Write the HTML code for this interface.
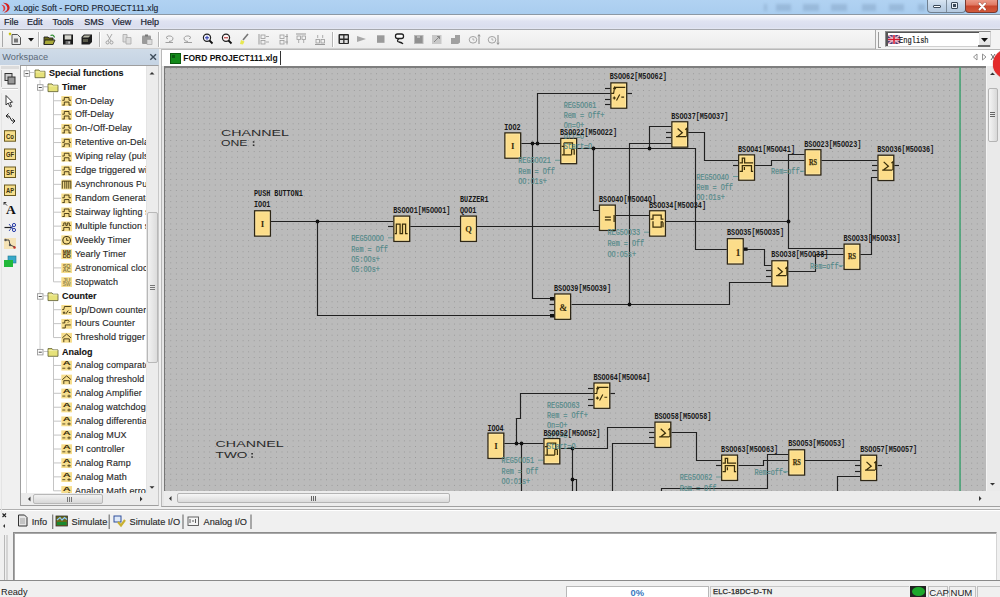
<!DOCTYPE html>
<html><head><meta charset="utf-8">
<style>
*{margin:0;padding:0;box-sizing:border-box}
html,body{width:1000px;height:597px;overflow:hidden;background:#f0f0f0;font-family:"Liberation Sans",sans-serif;color:#000}
.a{position:absolute}
.t{position:absolute;white-space:nowrap;line-height:1}
</style></head><body>
<div class="a" style="left:0;top:0;width:1000px;height:14px;background:linear-gradient(#b1d2f2,#a9cdef)"></div>
<div class="a" style="left:764px;top:4px;width:3px;height:7px;background:rgba(80,110,140,0.22);filter:blur(1.5px)"></div>
<div class="a" style="left:776px;top:4px;width:15px;height:7px;background:rgba(80,110,140,0.22);filter:blur(1.5px)"></div>
<div class="a" style="left:803px;top:4px;width:16px;height:7px;background:rgba(80,110,140,0.22);filter:blur(1.5px)"></div>
<div class="a" style="left:831px;top:4px;width:16px;height:7px;background:rgba(80,110,140,0.22);filter:blur(1.5px)"></div>
<div class="a" style="left:862px;top:4px;width:14px;height:7px;background:rgba(80,110,140,0.22);filter:blur(1.5px)"></div>
<div class="a" style="left:889px;top:4px;width:15px;height:7px;background:rgba(80,110,140,0.22);filter:blur(1.5px)"></div>
<div class="a" style="left:918px;top:4px;width:7px;height:7px;background:rgba(80,110,140,0.22);filter:blur(1.5px)"></div>
<div class="a" style="left:0;top:14px;width:1000px;height:1px;background:#8c99a5"></div>
<svg class="a" style="left:0;top:2px" width="11" height="11" viewBox="0 0 11 11"><path d="M3,0.8 C7.5,0.5 10,3.5 9.6,6.3 C9.2,9 6.5,10.8 3.8,10.6 C6.3,9.3 7.5,7.8 7.3,5.8 C7.1,3.6 5.3,1.9 3,0.8Z" fill="#d42020"/><path d="M1,2.8 C3.6,2.6 5.4,4.4 5.3,6.4 C5.2,8.2 3.8,9.4 2.2,9.6 C3.3,8.6 3.7,7.4 3.5,6.2 C3.3,4.6 2.3,3.5 1,2.8Z" fill="#e43a3a"/></svg>
<div class="t" style="left:14px;top:3.5px;font-size:8.6px;color:#1a2733;letter-spacing:0.03px;-webkit-text-stroke:0.12px #1a2733">xLogic Soft - FORD PROJECT111.xlg</div>
<div class="a" style="left:927px;top:-1px;width:39px;height:14px;border:1px solid #6f7f90;border-top:none;border-radius:0 0 4px 4px;background:linear-gradient(#dce8f4,#c3d5e8 50%,#b4c9df)"></div>
<div class="a" style="left:946px;top:0;width:1px;height:12px;background:#7d8c9b"></div>
<div class="a" style="left:933px;top:5px;width:8px;height:3px;border:1px solid #3b4a5a;background:#fff;border-radius:1px"></div>
<div class="a" style="left:951px;top:2px;width:7px;height:7px;border:1.5px solid #3b4a5a;border-radius:1px;background:#e8eef5"></div>
<div class="a" style="left:953px;top:4px;width:3px;height:3px;background:#3b4a5a"></div>
<div class="a" style="left:965px;top:-1px;width:33px;height:14px;border:1px solid #7a3a30;border-top:none;border-radius:0 0 4px 4px;background:linear-gradient(#eda08f,#e07a64 45%,#c9462c 55%,#d25a3c)"></div>
<svg class="a" style="left:977px;top:1.5px" width="11" height="9" viewBox="0 0 11 9"><path d="M2.5,1.5 L8,7.5 M8,1.5 L2.5,7.5" stroke="#3a1a10" stroke-width="3" stroke-linecap="round" opacity="0.35"/><path d="M2.5,1.5 L8,7.5 M8,1.5 L2.5,7.5" stroke="#fff" stroke-width="2" stroke-linecap="round"/></svg>
<div class="a" style="left:0;top:15px;width:1000px;height:14px;background:linear-gradient(#fafbfd 0,#eff1f8 20%,#dfe2f1 45%,#dadeee 85%,#e3e6f2 100%)"></div>
<div class="a" style="left:0;top:28.6px;width:1000px;height:1.2px;background:#a6a8ae"></div>
<div class="t" style="left:4px;top:18px;font-size:9px;color:#1b2533;-webkit-text-stroke:0.2px #1b2533">File</div>
<div class="t" style="left:27px;top:18px;font-size:9px;color:#1b2533;-webkit-text-stroke:0.2px #1b2533">Edit</div>
<div class="t" style="left:52.5px;top:18px;font-size:9px;color:#1b2533;-webkit-text-stroke:0.2px #1b2533">Tools</div>
<div class="t" style="left:84.3px;top:18px;font-size:9px;color:#1b2533;-webkit-text-stroke:0.2px #1b2533">SMS</div>
<div class="t" style="left:112px;top:18px;font-size:9px;color:#1b2533;-webkit-text-stroke:0.2px #1b2533">View</div>
<div class="t" style="left:140.5px;top:18px;font-size:9px;color:#1b2533;-webkit-text-stroke:0.2px #1b2533">Help</div>
<div class="a" style="left:0;top:29.8px;width:1000px;height:19px;background:linear-gradient(#f6f6f6,#ececec)"></div>
<div class="a" style="left:0;top:48px;width:1000px;height:1px;background:#cfcfcf"></div>
<div class="a" style="left:2px;top:31px;width:1px;height:16px;background:#a8a8a8"></div>
<div class="a" style="left:37.5px;top:32px;width:1px;height:15px;background:#b4b4b4"></div><div class="a" style="left:38.5px;top:32px;width:1px;height:15px;background:#fff"></div>
<div class="a" style="left:99px;top:32px;width:1px;height:15px;background:#b4b4b4"></div><div class="a" style="left:100px;top:32px;width:1px;height:15px;background:#fff"></div>
<div class="a" style="left:158px;top:32px;width:1px;height:15px;background:#b4b4b4"></div><div class="a" style="left:159px;top:32px;width:1px;height:15px;background:#fff"></div>
<div class="a" style="left:332px;top:32px;width:1px;height:15px;background:#b4b4b4"></div><div class="a" style="left:333px;top:32px;width:1px;height:15px;background:#fff"></div>
<svg class="a" style="left:0;top:0" width="1000" height="49" viewBox="0 0 1000 49">
<path d="M12,34.5 H17.5 L20.5,37.5 V44.5 H12Z" fill="#e9e9e9" stroke="#555" stroke-width="1"/><rect x="14" y="38.5" width="4" height="4" fill="#777"/><path d="M9,33 L11,35 M11,33 L9,35" stroke="#c8c000" stroke-width="1.2"/><path d="M28,38 H34 L31,41.5Z" fill="#111"/><path d="M44,37 H48 L49,38 H53 V44.5 H44Z" fill="#6a6a18" stroke="#222" stroke-width="0.9"/><path d="M45,40 H55 L53,44.5 H44Z" fill="#a8a838" stroke="#222" stroke-width="0.9"/><path d="M50.5,35.5 Q53.5,34 54.5,37.5" stroke="#2a8a2a" fill="none" stroke-width="1.2"/><rect x="63" y="34.5" width="10" height="10" fill="#1a1a1a"/><rect x="64.7" y="35.3" width="6.6" height="4.2" fill="#d8d8d0"/><rect x="65.5" y="41" width="5" height="3" fill="#6a6a6a"/><rect x="68.5" y="41.5" width="1.2" height="2" fill="#eee"/><path d="M81.5,37 L84,34.5 H92 V42 L89.5,44.5 H81.5Z" fill="#1e1e1e"/><path d="M82.5,37.5 L84.5,35.5 H90.5 L88.5,37.5Z" fill="#b8b8a8"/><rect x="83" y="39" width="5" height="3" fill="#5a5a4a"/><path d="M107,34 L111,41 M112,34 L108,41" stroke="#a0a0a0" stroke-width="0.9" fill="none"/><circle cx="107.5" cy="42.5" r="1.5" fill="none" stroke="#a0a0a0"/><circle cx="111.5" cy="42.5" r="1.5" fill="none" stroke="#a0a0a0"/><path d="M123,34.5 H127 V42 H123Z" fill="#ddd" stroke="#a8a8a8" stroke-width="0.8"/><path d="M126,37.5 H131 V44 H126Z" fill="#ddd" stroke="#a8a8a8" stroke-width="0.8"/><rect x="142" y="35.5" width="9" height="8.5" fill="#9a9a9a" rx="1"/><rect x="145" y="34.5" width="3" height="2" fill="#777"/><rect x="147" y="39.5" width="5" height="5" fill="#ddd" stroke="#999" stroke-width="0.6"/><path d="M165.5,42.5 H173 M168,36 Q173,35.5 173,39 Q172.5,41.5 169,41.5 M168,36 L166,37.5 L168,39" stroke="#a0a0a0" stroke-width="1" fill="none"/><path d="M184,42.5 H192 M189,36 Q184,35.5 184,39 Q184.5,41.5 188,41.5 M189,36 L191,37.5 L189,39" stroke="#a0a0a0" stroke-width="1" fill="none"/><circle cx="207" cy="37.8" r="3.6" fill="#f4f4ff" stroke="#222" stroke-width="1.2"/><path d="M209.5,40.5 L212.5,43.5" stroke="#111" stroke-width="1.8"/><path d="M205,37.8 H209 M207,35.8 V39.8" stroke="#2233aa" stroke-width="1"/><circle cx="226" cy="37.8" r="3.6" fill="#fff4f4" stroke="#222" stroke-width="1.2"/><path d="M228.5,40.5 L231.5,43.5" stroke="#111" stroke-width="1.8"/><path d="M224,37.8 H228" stroke="#aa2222" stroke-width="1"/><path d="M248,34 L243,40" stroke="#777" stroke-width="1.6"/><path d="M241,40 L244.5,41.5 L243,44.5 L240,44 Z" fill="#e8e850"/><path d="M259,34 V44.5" stroke="#999" stroke-width="1"/><rect x="261" y="35" width="4" height="3.5" fill="none" stroke="#999" stroke-width="0.8"/><rect x="261" y="40.5" width="4" height="3.5" fill="none" stroke="#999" stroke-width="0.8"/><path d="M266,36.5 H269 M266,42 H269" stroke="#999" stroke-width="0.8"/><path d="M287,34 V44.5" stroke="#999" stroke-width="1"/><rect x="280" y="35" width="4" height="3.5" fill="none" stroke="#999" stroke-width="0.8"/><rect x="280" y="40.5" width="4" height="3.5" fill="none" stroke="#999" stroke-width="0.8"/><path d="M285,36.5 H288 M285,42 H288" stroke="#999" stroke-width="0.8"/><path d="M296,34 H306" stroke="#999" stroke-width="1"/><rect x="297" y="36" width="3.5" height="3.5" fill="none" stroke="#999" stroke-width="0.8"/><rect x="302" y="36" width="3.5" height="3.5" fill="none" stroke="#999" stroke-width="0.8"/><path d="M298.7,40 V43 M303.7,40 V43" stroke="#999" stroke-width="0.8"/><path d="M315,44.5 H325" stroke="#999" stroke-width="1"/><rect x="316" y="39.5" width="3.5" height="3.5" fill="none" stroke="#999" stroke-width="0.8"/><rect x="321" y="39.5" width="3.5" height="3.5" fill="none" stroke="#999" stroke-width="0.8"/><path d="M317.7,35 V38 M322.7,35 V38" stroke="#999" stroke-width="0.8"/><rect x="338.5" y="34" width="10.5" height="10" fill="#2a2a2a" rx="1"/><rect x="340" y="35.5" width="3.2" height="3" fill="#ddd"/><rect x="344.5" y="35.5" width="3.2" height="3" fill="#ddd"/><rect x="340" y="40" width="3.2" height="3" fill="#ddd"/><rect x="344.5" y="40" width="3.2" height="3" fill="#ddd"/><path d="M357,36 L366,39 L357,42Z" fill="#a8a8a8"/><rect x="377" y="35.3" width="7.5" height="7.5" fill="#9a9a9a"/><rect x="395.5" y="34" width="8" height="4.5" rx="2" fill="#fff" stroke="#222" stroke-width="1.3"/><path d="M399,38.5 Q396,41 399,42 Q402,42.5 403,44" stroke="#222" stroke-width="1.3" fill="none"/><rect x="414" y="35" width="9.5" height="9" fill="#b8b8b8"/><path d="M415,36 H417 V38 H420 V36 H422.5 V43 H415Z" fill="#909090"/><rect x="432" y="35" width="9.5" height="9" fill="#c8c8c8"/><path d="M434,42 L439.5,36.5 M437,36.5 H439.5 V39" stroke="#888" stroke-width="1" fill="none"/><path d="M451,38 H455 V35 H460 V42.5 L458,44 H451Z" fill="#a0a0a0"/><ellipse cx="473" cy="39.8" rx="3.8" ry="3.3" fill="none" stroke="#999" stroke-width="0.9"/><path d="M473,38 V40 H474.5" stroke="#999" stroke-width="0.7" fill="none"/><path d="M479,35 V44" stroke="#888" stroke-width="1"/><path d="M477.8,36.3 L479,34.5 L480.2,36.3" stroke="#888" stroke-width="0.8" fill="none"/><ellipse cx="492" cy="39.8" rx="3.8" ry="3.3" fill="none" stroke="#999" stroke-width="0.9"/><path d="M492,38 V40 H493.5" stroke="#999" stroke-width="0.7" fill="none"/><path d="M498,35 V44" stroke="#888" stroke-width="1"/><path d="M496.8,42.7 L498,44.5 L499.2,42.7" stroke="#888" stroke-width="0.8" fill="none"/>
</svg>
<div class="a" style="left:874.5px;top:30px;width:1px;height:19px;background:#a8a8a8"></div><div class="a" style="left:875.5px;top:30px;width:125px;height:18.5px;background:#f3f3f3"></div><div class="a" style="left:878px;top:32px;width:1px;height:15px;background:#9a9a9a"></div><div class="a" style="left:878px;top:46.5px;width:3px;height:1px;background:#9a9a9a"></div>
<div class="a" style="left:885px;top:31px;width:106px;height:16px;background:#fff;border:1px solid #8a8a8a;border-right-color:#d0d0d0;border-bottom-color:#d0d0d0"></div>
<div class="a" style="left:886px;top:32px;width:1.5px;height:14px;background:#555"></div>
<div class="a" style="left:886px;top:32px;width:104px;height:1.2px;background:#555"></div>
<svg class="a" style="left:888px;top:35px" width="12" height="9" viewBox="0 0 12 9"><rect width="12" height="9" fill="#4a3a7a"/><path d="M0,0 L12,9 M12,0 L0,9" stroke="#e8b0c0" stroke-width="1.6"/><path d="M6,0 V9 M0,4.5 H12" stroke="#fff" stroke-width="2.6"/><path d="M6,0 V9 M0,4.5 H12" stroke="#d81830" stroke-width="1.6"/></svg>
<svg class="a" style="left:898px;top:32px" width="40" height="14" viewBox="898 32 40 14"><text x="899" y="42.6" font-family="Liberation Mono" font-size="9.2" fill="#222" stroke="#222" stroke-width="0.2" textLength="29.6" lengthAdjust="spacingAndGlyphs">English</text></svg>
<div class="a" style="left:979px;top:32px;width:11px;height:14px;background:linear-gradient(#f4f4f4,#e2e2e2);border-left:1px solid #e8e8e8"></div>
<div class="a" style="left:978px;top:45px;width:12px;height:1.5px;background:#6a6a6a"></div>
<svg class="a" style="left:980px;top:37px" width="9" height="6" viewBox="0 0 9 6"><path d="M1,1 H8 L4.5,5Z" fill="#111"/></svg>
<div class="a" style="left:159px;top:49px;width:841px;height:459px;background:#f0f0f0"></div>
<div class="a" style="left:161px;top:49px;width:839px;height:458px;background:#fff;border-left:1px solid #b8b8b8;border-top:1px solid #b8b8b8;border-bottom:1px solid #a0a0a0"></div><div class="a" style="left:162px;top:66px;width:2px;height:440px;background:#e6e6e6"></div>
<div class="a" style="left:169.5px;top:53px;width:11.5px;height:10.6px;background:#138a1a;border:1px solid #0a5a0e"></div>
<div class="a" style="left:172px;top:55px;width:3px;height:3px;background:#0a5a10"></div>
<div class="t" style="left:183.2px;top:53.8px;font-size:8.5px;font-weight:bold;color:#111">FORD PROJECT111.xlg</div>
<div class="a" style="left:280px;top:51px;width:1px;height:14px;background:#333"></div>
<svg class="a" style="left:970px;top:52px" width="30" height="10" viewBox="0 0 30 10"><path d="M7,2 L3.5,5 L7,8Z" fill="none" stroke="#888" stroke-width="0.9"/><path d="M12.5,2 L16,5 L12.5,8Z" fill="none" stroke="#888" stroke-width="0.9"/><path d="M21,2 L25,8 M25,2 L21,8" stroke="#666" stroke-width="1"/></svg>
<div class="a" style="left:164px;top:66px;width:822px;height:425.7px;background:#bbbbbb;border-left:1px solid #767676;border-top:2px solid #7e7e7e"></div>
<div class="a" style="left:986px;top:66px;width:14px;height:425px;background:#eaeaea;border-left:1px solid #f4f4f4"></div>
<svg class="a" style="left:986px;top:66px" width="14" height="425" viewBox="0 0 14 425"><path d="M4,9 L6.5,6.5 L9,9Z" fill="#333"/><path d="M4,417 L6.5,419.5 L9,417Z" fill="#333"/></svg>
<div class="a" style="left:987.5px;top:87.5px;width:10px;height:54px;background:linear-gradient(90deg,#f4f4f4,#d8d8d8);border:1px solid #b4b4b4;border-radius:2px"></div><div class="a" style="left:990px;top:112px;width:5px;height:1px;background:#666;box-shadow:0 2px 0 #666,0 4px 0 #666"></div>
<div class="a" style="left:164px;top:491px;width:836px;height:15px;background:#ececec"></div>
<svg class="a" style="left:164px;top:491px" width="836" height="15" viewBox="0 0 836 15"><path d="M5,7.5 L7.5,5 V10Z" fill="#333"/><path d="M815,5 L817.5,7.5 L815,10Z" fill="#333"/></svg>
<div class="a" style="left:177.3px;top:492.7px;width:273px;height:10.5px;background:linear-gradient(#f6f6f6,#dadada);border:1px solid #b4b4b4;border-radius:2px"></div>
<div class="a" style="left:311px;top:495.5px;width:1px;height:5px;background:#666;box-shadow:2px 0 0 #666,4px 0 0 #666"></div>
<div class="a" style="left:993.3px;top:48.5px;width:31px;height:30px;border-radius:50%;background:#e42b2b;box-shadow:0 0 1px #b01818"></div>
<div class="a" style="left:0;top:507px;width:1000px;height:74px;background:#f0f0f0"></div>
<div class="a" style="left:0;top:508.5px;width:1000px;height:1px;background:#b0b0b0"></div><div class="a" style="left:0;top:509.5px;width:1000px;height:1px;background:#fff"></div>
<svg class="a" style="left:0;top:510px" width="12" height="70" viewBox="0 0 12 70"><path d="M2.5,3.5 L6,7 M6,3.5 L2.5,7" stroke="#222" stroke-width="1.1"/><path d="M5,14 L3,16 L5,18Z" fill="#333"/><path d="M4.5,25 V70 M7,25 V70" stroke="#b8b8b8" stroke-width="1"/></svg>
<svg class="a" style="left:0;top:510px" width="260" height="22" viewBox="0 510 260 22">
<path d="M18.5,515 H24.5 L27,517.5 V526 H18.5Z" fill="#e4e4e4" stroke="#333" stroke-width="1"/><path d="M20,519 H25 M20,521 H25 M20,523 H25" stroke="#888" stroke-width="0.7"/>
<rect x="56" y="516" width="11.5" height="10" fill="#6a6a18" stroke="#333" stroke-width="0.8"/><path d="M57,520 L60,517.5 L62,520 L64.5,517.5 L67,519.5" stroke="#8ec8ff" stroke-width="1.2" fill="none"/><rect x="57" y="522" width="9.5" height="3" fill="#1a8a30"/>
<rect x="114" y="516" width="7" height="6" fill="#dde8f8" stroke="#2f4f9a" stroke-width="1"/><path d="M118,522 L121,525.5 L125,520" stroke="#c8b030" stroke-width="2.2" fill="none"/>
<rect x="188" y="517" width="10.5" height="8.5" fill="#f4f4f4" stroke="#555" stroke-width="0.9"/><path d="M190,519 V523 M192,521 H194 M195.5,519 V523" stroke="#333" stroke-width="0.8"/>
<path d="M52.7,514.5 V529 M109.2,514.5 V529 M183,514.5 V529 M251,514.5 V529" stroke="#777" stroke-width="1.2"/>
</svg>
<div class="t" style="left:31.8px;top:518.2px;font-size:9.2px;color:#2a2a2a;-webkit-text-stroke:0.15px #2a2a2a">Info</div>
<div class="t" style="left:71.5px;top:518.2px;font-size:9.2px;color:#2a2a2a;-webkit-text-stroke:0.15px #2a2a2a">Simulate</div>
<div class="t" style="left:129.5px;top:518.2px;font-size:9.2px;color:#2a2a2a;-webkit-text-stroke:0.15px #2a2a2a">Simulate I/O</div>
<div class="t" style="left:203.6px;top:518.2px;font-size:9.2px;color:#2a2a2a;-webkit-text-stroke:0.15px #2a2a2a">Analog I/O</div>
<div class="a" style="left:13px;top:532px;width:984px;height:49px;background:#fff;border:1px solid #8c8c8c;border-right-color:#d4d4d4;border-bottom-color:#dcdcdc"></div>
<div class="a" style="left:14px;top:533px;width:982px;height:1px;background:#a8a8a8"></div>
<div class="a" style="left:14px;top:533px;width:1px;height:47px;background:#a8a8a8"></div>
<div class="a" style="left:0;top:580px;width:1000px;height:17px;background:#f0f0f0"></div>
<div class="a" style="left:0;top:580px;width:1000px;height:1.3px;background:#8a8a8a"></div>
<div class="t" style="left:1px;top:587.5px;font-size:9.2px;color:#1a1a1a">Ready</div>
<div class="a" style="left:566px;top:585.5px;width:143px;height:12px;background:#fff;border:1px solid #b8b8b8;border-bottom:none"></div>
<div class="t" style="left:630.5px;top:588px;font-size:9.4px;color:#3a78c0;font-weight:bold">0%</div>
<div class="a" style="left:710px;top:585.5px;width:199px;height:12px;border:1px solid #c8c8c8;border-bottom:none;border-right:none"></div>
<div class="t" style="left:713px;top:587.6px;font-size:7.6px;color:#222;-webkit-text-stroke:0.25px #222;letter-spacing:0.15px">ELC-18DC-D-TN</div>
<div class="a" style="left:910px;top:585.5px;width:16px;height:12px;background:#222"></div>
<div class="a" style="left:911.5px;top:587px;width:13px;height:9px;border-radius:50%;background:#1ca82c"></div>
<div class="a" style="left:927.5px;top:585.5px;width:20.5px;height:12px;border:1px solid #c0c0c0;border-bottom:none"></div>
<div class="t" style="left:929.3px;top:587.6px;font-size:9.6px;color:#222">CAP</div>
<div class="a" style="left:949px;top:585.5px;width:26.5px;height:12px;border:1px solid #c0c0c0;border-bottom:none"></div>
<div class="t" style="left:950.5px;top:587.6px;font-size:9.6px;color:#222">NUM</div>
<div class="a" style="left:977px;top:585.5px;width:23px;height:12px;border:1px solid #c0c0c0;border-bottom:none;border-right:none"></div>
<div class="a" style="left:0;top:49px;width:159px;height:16px;background:linear-gradient(#cfdbe8,#c5d3e3)"></div>
<div class="t" style="left:2.3px;top:53.2px;font-size:9.2px;color:#5a6877">Workspace</div>
<svg class="a" style="left:149px;top:52.5px" width="9" height="9" viewBox="0 0 9 9"><path d="M1.3,1.3 L7,6.8 M7,1.3 L1.3,6.8" stroke="#3e4c5a" stroke-width="1.4"/></svg>
<div class="a" style="left:0;top:65px;width:159px;height:442px;background:#f0f0f0"></div>
<div class="a" style="left:1px;top:66px;width:18px;height:3px;background:#dcdcdc"></div>
<div class="a" style="left:2px;top:88px;width:16px;height:1px;background:#c8c8c8"></div><div class="a" style="left:2px;top:89px;width:16px;height:1px;background:#fff"></div>
<div class="a" style="left:1px;top:70px;width:1px;height:17px;background:#c8c8c8"></div>
<div class="a" style="left:1px;top:93px;width:1px;height:420px;background:#e4e4e4"></div>
<svg class="a" style="left:0;top:60px" width="20" height="220" viewBox="0 60 20 220">
<rect x="5" y="73.5" width="7" height="7" fill="#ccc" stroke="#333" stroke-width="1"/><rect x="8" y="77" width="7" height="7" fill="#999" stroke="#333" stroke-width="1"/>
<path d="M6,95.5 V105 L8.2,103 L10,107 L11.5,106.3 L9.8,102.5 L12.5,102.2Z" fill="#fff" stroke="#222" stroke-width="0.9"/>
<path d="M6,116 L8.5,113.5 M6,116 L8.5,118 M6,116 H9 L12,121 H15 M15,121 L12.5,118.5 M15,121 L12.5,123.5" stroke="#222" stroke-width="1" fill="none"/>
<rect x="4.5" y="130.7" width="11" height="10.5" fill="#f6de8a" stroke="#6a5a20" stroke-width="1"/><text x="10" y="138.7" font-size="6.8" font-family="Liberation Sans" font-weight="bold" fill="#3a3010" text-anchor="middle" textLength="8" lengthAdjust="spacingAndGlyphs">Co</text>
<rect x="4.5" y="149" width="11" height="10.5" fill="#f6de8a" stroke="#6a5a20" stroke-width="1"/><text x="10" y="157" font-size="6.8" font-family="Liberation Sans" font-weight="bold" fill="#3a3010" text-anchor="middle" textLength="8" lengthAdjust="spacingAndGlyphs">GF</text>
<rect x="4.5" y="167" width="11" height="10.5" fill="#f6de8a" stroke="#6a5a20" stroke-width="1"/><text x="10" y="175" font-size="6.8" font-family="Liberation Sans" font-weight="bold" fill="#3a3010" text-anchor="middle" textLength="8" lengthAdjust="spacingAndGlyphs">SF</text>
<rect x="4.5" y="185" width="11" height="10.5" fill="#f6de8a" stroke="#6a5a20" stroke-width="1"/><text x="10" y="193" font-size="6.8" font-family="Liberation Sans" font-weight="bold" fill="#3a3010" text-anchor="middle" textLength="8" lengthAdjust="spacingAndGlyphs">AP</text>
<path d="M4,202.5 L7,205.5 M4,202.5 H6.3 M4,202.5 V204.8" stroke="#222" stroke-width="0.9" fill="none"/><text x="10.8" y="213.6" font-size="13.5" font-weight="bold" font-family="Liberation Serif" fill="#111" text-anchor="middle">A</text>
<path d="M4.5,227.5 H12" stroke="#222" stroke-width="1.2"/><circle cx="14" cy="225" r="1.6" fill="none" stroke="#2a3ea8" stroke-width="1"/><circle cx="14" cy="230" r="1.6" fill="none" stroke="#2a3ea8" stroke-width="1"/><path d="M9,224 L13,229 M9,231 L13,226" stroke="#2a3ea8" stroke-width="0.9"/>
<rect x="4" y="238" width="12" height="11" fill="#f4e2b6"/><path d="M5,240 L9,240 L10,245 L15,247" stroke="#333" stroke-width="0.9" fill="none"/><circle cx="5.5" cy="240" r="1.2" fill="#555"/><circle cx="10" cy="245" r="1.2" fill="#555"/><circle cx="14.5" cy="247.5" r="1.2" fill="#c03030"/>
<rect x="8" y="256" width="8" height="7" fill="#38a8c8" stroke="#207890" stroke-width="0.6"/><rect x="4" y="260" width="9" height="7" fill="#22b83a"/>
</svg>
<div class="a" style="left:20px;top:65px;width:139px;height:441px;background:#fff;border:1px solid #9e9e9e;border-right-color:#c8c8c8"></div>
<div class="a" style="left:21px;top:66px;width:125px;height:427px;overflow:hidden">
<svg class="a" style="left:0;top:0" width="125" height="427" viewBox="21 66 125 427"><path d="M26.5,66 V493" stroke="#dcdcdc" stroke-width="1"/><path d="M40,80 V351" stroke="#d0d0d0" stroke-width="1"/><path d="M30,72.5 H34 M43,86.5 H47" stroke="#c8c8c8" stroke-width="1"/><rect x="24.1" y="70.8" width="5.5" height="5.5" fill="#fff" stroke="#9a9a9a" stroke-width="0.9"/><path d="M25.3,73.6 H28.400000000000002" stroke="#333" stroke-width="0.9"/><path d="M35,70.0 H39 L40,71.3 H45 V77.7 H35Z" fill="#e6e27a" stroke="#5a5a30" stroke-width="0.8"/><path d="M35.5,72.0 H44.5" stroke="#f6f4b8" stroke-width="0.8"/><rect x="37.5" y="84.73" width="5.5" height="5.5" fill="#fff" stroke="#9a9a9a" stroke-width="0.9"/><path d="M38.7,87.53 H41.8" stroke="#333" stroke-width="0.9"/><path d="M43,86.83 H48" stroke="#c8c8c8" stroke-width="1"/><path d="M48,83.93 H52 L53,85.23 H58 V91.63000000000001 H48Z" fill="#e6e27a" stroke="#5a5a30" stroke-width="0.8"/><path d="M48.5,85.93 H57.5" stroke="#f6f4b8" stroke-width="0.8"/><path d="M53.5,100.75999999999999 H61" stroke="#c4c4c4" stroke-width="1"/><rect x="61.3" y="96.05999999999999" width="10.7" height="9.8" fill="#f6dd8c"/><path d="M62.3,100.25999999999999 H64.3 V97.55999999999999 H69.0 V100.25999999999999 H71.0 M64.3,105.35999999999999 V102.05999999999999 H69.0 V105.35999999999999 M62.3,105.05999999999999 H64.3 M69.0,105.05999999999999 H71.0" stroke="#3e3210" stroke-width="0.9" fill="none"/><path d="M53.5,114.68999999999998 H61" stroke="#c4c4c4" stroke-width="1"/><rect x="61.3" y="109.98999999999998" width="10.7" height="9.8" fill="#f6dd8c"/><path d="M62.3,114.18999999999998 H64.3 V111.48999999999998 H69.0 V114.18999999999998 H71.0 M64.3,119.28999999999998 V115.98999999999998 H69.0 V119.28999999999998 M62.3,118.98999999999998 H64.3 M69.0,118.98999999999998 H71.0" stroke="#3e3210" stroke-width="0.9" fill="none"/><path d="M53.5,128.62 H61" stroke="#c4c4c4" stroke-width="1"/><rect x="61.3" y="123.91999999999999" width="10.7" height="9.8" fill="#f6dd8c"/><path d="M62.3,128.11999999999998 H64.3 V125.41999999999999 H69.0 V128.11999999999998 H71.0 M64.3,133.22 V129.92 H69.0 V133.22 M62.3,132.92 H64.3 M69.0,132.92 H71.0" stroke="#3e3210" stroke-width="0.9" fill="none"/><path d="M53.5,142.55 H61" stroke="#c4c4c4" stroke-width="1"/><rect x="61.3" y="137.85" width="10.7" height="9.8" fill="#f6dd8c"/><path d="M62.3,142.35 H64.3 V139.35 H69.3 V142.35 H71.0 M62.3,146.35 H64.3 V143.85 H69.3 V146.85" stroke="#3e3210" stroke-width="0.9" fill="none"/><path d="M53.5,156.48000000000002 H61" stroke="#c4c4c4" stroke-width="1"/><rect x="61.3" y="151.78" width="10.7" height="9.8" fill="#f6dd8c"/><path d="M62.3,155.98 H64.3 V153.28 H69.0 V155.98 H71.0 M64.3,161.08 V157.78 H69.0 V161.08 M62.3,160.78 H64.3 M69.0,160.78 H71.0" stroke="#3e3210" stroke-width="0.9" fill="none"/><path d="M53.5,170.41 H61" stroke="#c4c4c4" stroke-width="1"/><rect x="61.3" y="165.70999999999998" width="10.7" height="9.8" fill="#f6dd8c"/><path d="M62.3,169.90999999999997 H64.3 V167.20999999999998 H69.0 V169.90999999999997 H71.0 M64.3,175.01 V171.70999999999998 H69.0 V175.01 M62.3,174.70999999999998 H64.3 M69.0,174.70999999999998 H71.0" stroke="#3e3210" stroke-width="0.9" fill="none"/><path d="M53.5,184.34 H61" stroke="#c4c4c4" stroke-width="1"/><rect x="61.3" y="179.64" width="10.7" height="9.8" fill="#f6dd8c"/><path d="M62.3,188.64 V181.14 H70.8 V188.64 M64.8,181.14 V188.64 M66.8,181.14 V188.64 M68.8,181.14 V188.64" stroke="#3e3210" stroke-width="0.9" fill="none"/><path d="M53.5,198.27 H61" stroke="#c4c4c4" stroke-width="1"/><rect x="61.3" y="193.57" width="10.7" height="9.8" fill="#f6dd8c"/><path d="M62.3,197.76999999999998 H64.3 V195.07 H69.0 V197.76999999999998 H71.0 M64.3,202.87 V199.57 H69.0 V202.87 M62.3,202.57 H64.3 M69.0,202.57 H71.0" stroke="#3e3210" stroke-width="0.9" fill="none"/><path d="M53.5,212.20000000000002 H61" stroke="#c4c4c4" stroke-width="1"/><rect x="61.3" y="207.5" width="10.7" height="9.8" fill="#f6dd8c"/><path d="M62.3,211.7 H64.3 V209.0 H69.0 V211.7 H71.0 M64.3,216.8 V213.5 H69.0 V216.8 M62.3,216.5 H64.3 M69.0,216.5 H71.0" stroke="#3e3210" stroke-width="0.9" fill="none"/><path d="M53.5,226.13 H61" stroke="#c4c4c4" stroke-width="1"/><rect x="61.3" y="221.42999999999998" width="10.7" height="9.8" fill="#f6dd8c"/><path d="M62.3,225.42999999999998 H63.8 V222.92999999999998 H65.8 V225.42999999999998 H67.3 V222.92999999999998 H69.3 V225.42999999999998 H71.0 M62.3,230.42999999999998 H63.8 V227.42999999999998 H69.3 V230.42999999999998" stroke="#3e3210" stroke-width="0.9" fill="none"/><path d="M53.5,240.06 H61" stroke="#c4c4c4" stroke-width="1"/><rect x="61.3" y="235.35999999999999" width="10.7" height="9.8" fill="#f6dd8c"/><circle cx="66.64999999999999" cy="240.26" r="3.8" fill="none" stroke="#3e3210" stroke-width="1.1"/><path d="M66.64999999999999,237.85999999999999 V240.35999999999999 H68.6" stroke="#3e3210" stroke-width="0.9" fill="none"/><path d="M53.5,253.99 H61" stroke="#c4c4c4" stroke-width="1"/><rect x="61.3" y="249.29" width="10.7" height="9.8" fill="#f6dd8c"/><text x="66.64999999999999" y="253.69" font-family="Liberation Sans" font-weight="bold" font-size="4.6" fill="#3e3210" text-anchor="middle" textLength="8" lengthAdjust="spacingAndGlyphs">MM</text><text x="66.64999999999999" y="258.49" font-family="Liberation Sans" font-weight="bold" font-size="4.6" fill="#3e3210" text-anchor="middle" textLength="8" lengthAdjust="spacingAndGlyphs">DD</text><path d="M53.5,267.92 H61" stroke="#c4c4c4" stroke-width="1"/><rect x="61.3" y="263.22" width="10.7" height="9.8" fill="#f6dd8c"/><text x="66.64999999999999" y="267.62" font-family="Liberation Sans" font-weight="bold" font-size="4.6" fill="#8a7a40" text-anchor="middle" textLength="8" lengthAdjust="spacingAndGlyphs">SO</text><text x="66.64999999999999" y="272.42" font-family="Liberation Sans" font-weight="bold" font-size="4.6" fill="#8a7a40" text-anchor="middle" textLength="8" lengthAdjust="spacingAndGlyphs">AC</text><path d="M53.5,281.84999999999997 H61" stroke="#c4c4c4" stroke-width="1"/><rect x="61.3" y="277.15" width="10.7" height="9.8" fill="#f6dd8c"/><text x="66.64999999999999" y="281.54999999999995" font-family="Liberation Sans" font-weight="bold" font-size="4.6" fill="#9a8a50" text-anchor="middle" textLength="8" lengthAdjust="spacingAndGlyphs">JU</text><text x="66.64999999999999" y="286.34999999999997" font-family="Liberation Sans" font-weight="bold" font-size="4.6" fill="#9a8a50" text-anchor="middle" textLength="8" lengthAdjust="spacingAndGlyphs">SW</text><rect x="37.5" y="293.68" width="5.5" height="5.5" fill="#fff" stroke="#9a9a9a" stroke-width="0.9"/><path d="M38.7,296.48 H41.8" stroke="#333" stroke-width="0.9"/><path d="M43,295.78000000000003 H48" stroke="#c8c8c8" stroke-width="1"/><path d="M48,292.88 H52 L53,294.18 H58 V300.58 H48Z" fill="#e6e27a" stroke="#5a5a30" stroke-width="0.8"/><path d="M48.5,294.88 H57.5" stroke="#f6f4b8" stroke-width="0.8"/><path d="M53.5,309.71 H61" stroke="#c4c4c4" stroke-width="1"/><rect x="61.3" y="305.01" width="10.7" height="9.8" fill="#f6dd8c"/><path d="M62.3,309.51 H63.8 L64.5,306.51 H70.8 M62.8,312.81 H65.3 M64.0,311.51 V314.01 M65.8,314.01 L68.3,310.51 M68.8,312.51 H70.8" stroke="#3e3210" stroke-width="0.9" fill="none"/><path d="M53.5,323.64000000000004 H61" stroke="#c4c4c4" stroke-width="1"/><rect x="61.3" y="318.94000000000005" width="10.7" height="9.8" fill="#f6dd8c"/><path d="M62.3,322.94000000000005 H64.8 V320.44000000000005 H67.8 M62.3,327.94000000000005 H65.3 V324.94000000000005 H70.8" stroke="#3e3210" stroke-width="0.9" fill="none"/><path d="M67.8,319.74000000000007 L69.3,321.24000000000007 L67.8,322.74000000000007" stroke="#3e3210" stroke-width="0.8" fill="none"/><path d="M53.5,337.57 H61" stroke="#c4c4c4" stroke-width="1"/><rect x="61.3" y="332.87" width="10.7" height="9.8" fill="#f6dd8c"/><path d="M62.3,337.87 L66.64999999999999,334.07 L71.0,337.87 M63.8,342.17 V338.87 H69.3 V342.17" stroke="#3e3210" stroke-width="0.9" fill="none"/><rect x="37.5" y="349.40000000000003" width="5.5" height="5.5" fill="#fff" stroke="#9a9a9a" stroke-width="0.9"/><path d="M38.7,352.20000000000005 H41.8" stroke="#333" stroke-width="0.9"/><path d="M43,351.50000000000006 H48" stroke="#c8c8c8" stroke-width="1"/><path d="M48,348.6 H52 L53,349.90000000000003 H58 V356.3 H48Z" fill="#e6e27a" stroke="#5a5a30" stroke-width="0.8"/><path d="M48.5,350.6 H57.5" stroke="#f6f4b8" stroke-width="0.8"/><path d="M53.5,365.43 H61" stroke="#c4c4c4" stroke-width="1"/><rect x="61.3" y="360.73" width="10.7" height="9.8" fill="#f6dd8c"/><text x="66.64999999999999" y="365.33000000000004" font-family="Liberation Sans" font-weight="bold" font-size="4.8" fill="#3e3210" text-anchor="middle" textLength="8" lengthAdjust="spacingAndGlyphs">A</text><path d="M62.3,368.23 H65.3 M67.3,368.23 H70.8 M69.0,366.73 V369.73" stroke="#3e3210" stroke-width="0.8" fill="none"/><path d="M53.5,379.35999999999996 H61" stroke="#c4c4c4" stroke-width="1"/><rect x="61.3" y="374.65999999999997" width="10.7" height="9.8" fill="#f6dd8c"/><path d="M62.3,379.65999999999997 L66.64999999999999,375.85999999999996 L71.0,379.65999999999997 M63.8,383.96 V380.65999999999997 H69.3 V383.96" stroke="#3e3210" stroke-width="0.9" fill="none"/><path d="M53.5,393.29 H61" stroke="#c4c4c4" stroke-width="1"/><rect x="61.3" y="388.59000000000003" width="10.7" height="9.8" fill="#f6dd8c"/><text x="66.64999999999999" y="393.19000000000005" font-family="Liberation Sans" font-weight="bold" font-size="4.8" fill="#3e3210" text-anchor="middle" textLength="8" lengthAdjust="spacingAndGlyphs">A</text><path d="M62.3,396.09000000000003 H65.3 M67.3,396.09000000000003 H70.8 M69.0,394.59000000000003 V397.59000000000003" stroke="#3e3210" stroke-width="0.8" fill="none"/><path d="M53.5,407.21999999999997 H61" stroke="#c4c4c4" stroke-width="1"/><rect x="61.3" y="402.52" width="10.7" height="9.8" fill="#f6dd8c"/><text x="66.64999999999999" y="407.12" font-family="Liberation Sans" font-weight="bold" font-size="4.8" fill="#3e3210" text-anchor="middle" textLength="8" lengthAdjust="spacingAndGlyphs">A</text><path d="M62.3,410.02 H65.3 M67.3,410.02 H70.8 M69.0,408.52 V411.52" stroke="#3e3210" stroke-width="0.8" fill="none"/><path d="M53.5,421.15000000000003 H61" stroke="#c4c4c4" stroke-width="1"/><rect x="61.3" y="416.45000000000005" width="10.7" height="9.8" fill="#f6dd8c"/><text x="66.64999999999999" y="421.05000000000007" font-family="Liberation Sans" font-weight="bold" font-size="4.8" fill="#3e3210" text-anchor="middle" textLength="8" lengthAdjust="spacingAndGlyphs">A</text><path d="M62.3,423.95000000000005 H65.3 M67.3,423.95000000000005 H70.8 M69.0,422.45000000000005 V425.45000000000005" stroke="#3e3210" stroke-width="0.8" fill="none"/><path d="M53.5,435.08 H61" stroke="#c4c4c4" stroke-width="1"/><rect x="61.3" y="430.38" width="10.7" height="9.8" fill="#f6dd8c"/><text x="66.64999999999999" y="434.98" font-family="Liberation Sans" font-weight="bold" font-size="4.8" fill="#3e3210" text-anchor="middle" textLength="8" lengthAdjust="spacingAndGlyphs">A</text><path d="M62.3,437.88 H65.3 M67.3,437.88 H70.8 M69.0,436.38 V439.38" stroke="#3e3210" stroke-width="0.8" fill="none"/><path d="M53.5,449.01000000000005 H61" stroke="#c4c4c4" stroke-width="1"/><rect x="61.3" y="444.31000000000006" width="10.7" height="9.8" fill="#f6dd8c"/><text x="66.64999999999999" y="448.9100000000001" font-family="Liberation Sans" font-weight="bold" font-size="4.8" fill="#3e3210" text-anchor="middle" textLength="8" lengthAdjust="spacingAndGlyphs">A</text><path d="M62.3,451.81000000000006 H65.3 M67.3,451.81000000000006 H70.8 M69.0,450.31000000000006 V453.31000000000006" stroke="#3e3210" stroke-width="0.8" fill="none"/><path d="M53.5,462.94 H61" stroke="#c4c4c4" stroke-width="1"/><rect x="61.3" y="458.24" width="10.7" height="9.8" fill="#f6dd8c"/><text x="66.64999999999999" y="462.84000000000003" font-family="Liberation Sans" font-weight="bold" font-size="4.8" fill="#3e3210" text-anchor="middle" textLength="8" lengthAdjust="spacingAndGlyphs">A</text><path d="M62.3,465.74 H65.3 M67.3,465.74 H70.8 M69.0,464.24 V467.24" stroke="#3e3210" stroke-width="0.8" fill="none"/><path d="M53.5,476.86999999999995 H61" stroke="#c4c4c4" stroke-width="1"/><rect x="61.3" y="472.16999999999996" width="10.7" height="9.8" fill="#f6dd8c"/><text x="66.64999999999999" y="476.77" font-family="Liberation Sans" font-weight="bold" font-size="4.8" fill="#3e3210" text-anchor="middle" textLength="8" lengthAdjust="spacingAndGlyphs">A</text><path d="M62.3,479.66999999999996 H65.3 M67.3,479.66999999999996 H70.8 M69.0,478.16999999999996 V481.16999999999996" stroke="#3e3210" stroke-width="0.8" fill="none"/><path d="M53.5,490.8 H61" stroke="#c4c4c4" stroke-width="1"/><rect x="61.3" y="486.1" width="10.7" height="9.8" fill="#f6dd8c"/><text x="66.64999999999999" y="490.70000000000005" font-family="Liberation Sans" font-weight="bold" font-size="4.8" fill="#3e3210" text-anchor="middle" textLength="8" lengthAdjust="spacingAndGlyphs">A</text><path d="M62.3,493.6 H65.3 M67.3,493.6 H70.8 M69.0,492.1 V495.1" stroke="#3e3210" stroke-width="0.8" fill="none"/><path d="M53.5,92.53 V281.84999999999997" stroke="#c4c4c4" stroke-width="1"/><path d="M53.5,301.48 V337.57" stroke="#c4c4c4" stroke-width="1"/><path d="M53.5,357.20000000000005 V490.8" stroke="#c4c4c4" stroke-width="1"/></svg>
<div class="t" style="left:28px;top:3.00px;font-size:9px;font-weight:bold;color:#111;-webkit-text-stroke:0.1px #111">Special functions</div>
<div class="t" style="left:41px;top:16.93px;font-size:9px;font-weight:bold;color:#111;-webkit-text-stroke:0.1px #111">Timer</div>
<div class="t" style="left:54px;top:30.56px;font-size:9px;color:#2a2a2a;-webkit-text-stroke:0.15px #2a2a2a;letter-spacing:0.12px">On-Delay</div>
<div class="t" style="left:54px;top:44.49px;font-size:9px;color:#2a2a2a;-webkit-text-stroke:0.15px #2a2a2a;letter-spacing:0.12px">Off-Delay</div>
<div class="t" style="left:54px;top:58.42px;font-size:9px;color:#2a2a2a;-webkit-text-stroke:0.15px #2a2a2a;letter-spacing:0.12px">On-/Off-Delay</div>
<div class="t" style="left:54px;top:72.35px;font-size:9px;color:#2a2a2a;-webkit-text-stroke:0.15px #2a2a2a;letter-spacing:0.12px">Retentive on-Delay</div>
<div class="t" style="left:54px;top:86.28px;font-size:9px;color:#2a2a2a;-webkit-text-stroke:0.15px #2a2a2a;letter-spacing:0.12px">Wiping relay (pulse</div>
<div class="t" style="left:54px;top:100.21px;font-size:9px;color:#2a2a2a;-webkit-text-stroke:0.15px #2a2a2a;letter-spacing:0.12px">Edge triggered wip</div>
<div class="t" style="left:54px;top:114.14px;font-size:9px;color:#2a2a2a;-webkit-text-stroke:0.15px #2a2a2a;letter-spacing:0.12px">Asynchronous Pulse</div>
<div class="t" style="left:54px;top:128.07px;font-size:9px;color:#2a2a2a;-webkit-text-stroke:0.15px #2a2a2a;letter-spacing:0.12px">Random Generator</div>
<div class="t" style="left:54px;top:142.00px;font-size:9px;color:#2a2a2a;-webkit-text-stroke:0.15px #2a2a2a;letter-spacing:0.12px">Stairway lighting sw</div>
<div class="t" style="left:54px;top:155.93px;font-size:9px;color:#2a2a2a;-webkit-text-stroke:0.15px #2a2a2a;letter-spacing:0.12px">Multiple function sw</div>
<div class="t" style="left:54px;top:169.86px;font-size:9px;color:#2a2a2a;-webkit-text-stroke:0.15px #2a2a2a;letter-spacing:0.12px">Weekly Timer</div>
<div class="t" style="left:54px;top:183.79px;font-size:9px;color:#2a2a2a;-webkit-text-stroke:0.15px #2a2a2a;letter-spacing:0.12px">Yearly Timer</div>
<div class="t" style="left:54px;top:197.72px;font-size:9px;color:#2a2a2a;-webkit-text-stroke:0.15px #2a2a2a;letter-spacing:0.12px">Astronomical clock</div>
<div class="t" style="left:54px;top:211.65px;font-size:9px;color:#2a2a2a;-webkit-text-stroke:0.15px #2a2a2a;letter-spacing:0.12px">Stopwatch</div>
<div class="t" style="left:41px;top:225.88px;font-size:9px;font-weight:bold;color:#111;-webkit-text-stroke:0.1px #111">Counter</div>
<div class="t" style="left:54px;top:239.51px;font-size:9px;color:#2a2a2a;-webkit-text-stroke:0.15px #2a2a2a;letter-spacing:0.12px">Up/Down counter</div>
<div class="t" style="left:54px;top:253.44px;font-size:9px;color:#2a2a2a;-webkit-text-stroke:0.15px #2a2a2a;letter-spacing:0.12px">Hours Counter</div>
<div class="t" style="left:54px;top:267.37px;font-size:9px;color:#2a2a2a;-webkit-text-stroke:0.15px #2a2a2a;letter-spacing:0.12px">Threshold trigger</div>
<div class="t" style="left:41px;top:281.60px;font-size:9px;font-weight:bold;color:#111;-webkit-text-stroke:0.1px #111">Analog</div>
<div class="t" style="left:54px;top:295.23px;font-size:9px;color:#2a2a2a;-webkit-text-stroke:0.15px #2a2a2a;letter-spacing:0.12px">Analog comparator</div>
<div class="t" style="left:54px;top:309.16px;font-size:9px;color:#2a2a2a;-webkit-text-stroke:0.15px #2a2a2a;letter-spacing:0.12px">Analog threshold</div>
<div class="t" style="left:54px;top:323.09px;font-size:9px;color:#2a2a2a;-webkit-text-stroke:0.15px #2a2a2a;letter-spacing:0.12px">Analog Amplifier</div>
<div class="t" style="left:54px;top:337.02px;font-size:9px;color:#2a2a2a;-webkit-text-stroke:0.15px #2a2a2a;letter-spacing:0.12px">Analog watchdog</div>
<div class="t" style="left:54px;top:350.95px;font-size:9px;color:#2a2a2a;-webkit-text-stroke:0.15px #2a2a2a;letter-spacing:0.12px">Analog differential</div>
<div class="t" style="left:54px;top:364.88px;font-size:9px;color:#2a2a2a;-webkit-text-stroke:0.15px #2a2a2a;letter-spacing:0.12px">Analog MUX</div>
<div class="t" style="left:54px;top:378.81px;font-size:9px;color:#2a2a2a;-webkit-text-stroke:0.15px #2a2a2a;letter-spacing:0.12px">PI controller</div>
<div class="t" style="left:54px;top:392.74px;font-size:9px;color:#2a2a2a;-webkit-text-stroke:0.15px #2a2a2a;letter-spacing:0.12px">Analog Ramp</div>
<div class="t" style="left:54px;top:406.67px;font-size:9px;color:#2a2a2a;-webkit-text-stroke:0.15px #2a2a2a;letter-spacing:0.12px">Analog Math</div>
<div class="t" style="left:54px;top:420.60px;font-size:9px;color:#2a2a2a;-webkit-text-stroke:0.15px #2a2a2a;letter-spacing:0.12px">Analog Math error</div>
</div>
<div class="a" style="left:146px;top:66px;width:12px;height:427px;background:#ececec;border-left:1px solid #e4e4e4"></div>
<svg class="a" style="left:146px;top:66px" width="12" height="427" viewBox="0 0 12 427"><path d="M3.5,8.5 L6,6 L8.5,8.5Z" fill="#333"/><path d="M3.5,420.3 L6,422.8 L8.5,420.3Z" fill="#333"/></svg>
<div class="a" style="left:147px;top:212px;width:11px;height:151px;background:linear-gradient(90deg,#f2f2f2,#dcdcdc);border:1px solid #b8b8b8;border-radius:2px"></div>
<div class="a" style="left:150px;top:285px;width:5px;height:1px;background:#777;box-shadow:0 2px 0 #777,0 4px 0 #777"></div>
<div class="a" style="left:21px;top:493px;width:137px;height:12px;background:#ececec"></div>
<svg class="a" style="left:21px;top:493px" width="137" height="12" viewBox="0 0 137 12"><path d="M7,6 L9.5,3.5 V8.5Z" fill="#333"/><path d="M119,3.5 L121.5,6 L119,8.5Z" fill="#333"/></svg>
<div class="a" style="left:33px;top:494px;width:70px;height:10px;background:linear-gradient(#f2f2f2,#d8d8d8);border:1px solid #b8b8b8;border-radius:2px"></div>
<div class="a" style="left:67px;top:496.5px;width:1px;height:5px;background:#777;box-shadow:2px 0 0 #777,4px 0 0 #777"></div>
<svg class="a" style="left:0;top:0" width="1000" height="597" viewBox="0 0 1000 597">
<defs><pattern id="dots" x="170.3" y="73.3" width="5.562" height="5.562" patternUnits="userSpaceOnUse"><rect x="-0.7" y="-0.7" width="1.4" height="1.4" fill="#7a7a7a"/></pattern>
<clipPath id="cv"><rect x="165" y="67" width="821" height="424"/></clipPath></defs>
<g clip-path="url(#cv)">
<rect x="165" y="67" width="821" height="424" fill="url(#dots)"/>
<rect x="959.3" y="67" width="1.5" height="424" fill="#40a070"/>
<g font-family="Liberation Sans" fill="#2a2a2a" font-size="9.7">
<text x="221" y="135.8" textLength="68" lengthAdjust="spacingAndGlyphs">CHANNEL</text>
<text x="221" y="146" textLength="26.5" lengthAdjust="spacingAndGlyphs">ONE</text><rect x="252.8" y="141.2" width="1.6" height="1.5"/><rect x="252.8" y="144.5" width="1.6" height="1.5"/>
<text x="215.6" y="447" textLength="68" lengthAdjust="spacingAndGlyphs">CHANNEL</text>
<text x="215.6" y="457.8" textLength="31.8" lengthAdjust="spacingAndGlyphs">TWO</text><rect x="251.3" y="453" width="1.6" height="1.5"/><rect x="251.3" y="456.3" width="1.6" height="1.5"/>
</g>
<g fill="none" stroke="#202020" stroke-width="1.15">
<path d="M271,221.5 L393.3,221.5"/>
<path d="M317.5,221.4 L317.5,315.5 L554.2,315.5"/>
<path d="M388,226.5 L393.3,226.5"/>
<path d="M410.3,226.5 L460,226.5"/>
<path d="M476.8,226.5 L598.9,226.5"/>
<path d="M521.4,143.5 L560.2,143.5"/>
<path d="M537.5,143 L537.5,93.5 L610.3,93.5"/>
<path d="M532.5,143 L532.5,298.5 L554.2,298.5"/>
<path d="M605,88.5 L610.3,88.5"/>
<path d="M605,99.5 L610.3,99.5"/>
<path d="M605,104.5 L610.3,104.5"/>
<path d="M627.3,93.5 L632,93.5"/>
<path d="M576.6,148.5 L695.5,148.5 L695.5,249.5 L726.8,249.5"/>
<path d="M593.5,148.6 L593.5,210.5 L598.9,210.5"/>
<path d="M649.5,148.6 L649.5,126.5 L671.3,126.5"/>
<path d="M666,132.5 L671.3,132.5"/>
<path d="M666,137.5 L671.3,137.5"/>
<path d="M629.5,303.8 L629.5,143.5 L671.3,143.5"/>
<path d="M571.6,304.5 L729.5,304.5 L729.5,282.5 L771.3,282.5"/>
<path d="M688.3,132.5 L704.5,132.5 L704.5,160.5 L738.1,160.5"/>
<path d="M733,165.5 L738.1,165.5"/>
<path d="M755.1,165.5 L771.5,165.5 L771.5,160.5 L804.5,160.5"/>
<path d="M804.5,154.5 L788.5,154.5 L788.5,248.5 L843.5,248.5"/>
<path d="M615.9,215.5 L649,215.5"/>
<path d="M666,221.5 L788.6,221.5"/>
<path d="M821.5,160.5 L877.4,160.5"/>
<path d="M872,165.5 L877.4,165.5"/>
<path d="M872,170.5 L877.4,170.5"/>
<path d="M877.4,177.5 L871.5,177.5 L871.5,254.5 L860.5,254.5"/>
<path d="M894.4,165.5 L899,165.5"/>
<path d="M743.6,249.5 L764.5,249.5 L764.5,265.5 L771.3,265.5"/>
<path d="M766,270.5 L771.3,270.5"/>
<path d="M766,276.5 L771.3,276.5"/>
<path d="M788.3,271.5 L815.5,271.5 L815.5,254.5 L843.5,254.5"/>
<path d="M549.5,304.5 L554.2,304.5"/>
<path d="M549.5,310.5 L554.2,310.5"/>
<path d="M504.4,443.5 L543.4,443.5"/>
<path d="M516.5,443.3 L516.5,418.5 L520.5,418.5 L520.5,393.5 L593.4,393.5"/>
<path d="M521.5,443.3 L521.5,491"/>
<path d="M588,388.5 L593.4,388.5"/>
<path d="M588,399.5 L593.4,399.5"/>
<path d="M588,405.5 L593.4,405.5"/>
<path d="M610.4,393.5 L615,393.5"/>
<path d="M560.4,448.5 L607.5,448.5 L607.5,427.5 L654.4,427.5"/>
<path d="M572.5,448.8 L572.5,491"/>
<path d="M572.2,479.5 L576.5,479.5 L576.5,491"/>
<path d="M654.4,443.5 L612.5,443.5 L612.5,491"/>
<path d="M649,432.5 L654.4,432.5"/>
<path d="M649,437.5 L654.4,437.5"/>
<path d="M671.6,432.5 L696.5,432.5 L696.5,460.5 L721.1,460.5"/>
<path d="M716,465.5 L721.1,465.5"/>
<path d="M738.6,465.5 L763.5,465.5 L763.5,460.5 L788.2,460.5"/>
<path d="M788.2,454.5 L767.5,454.5 L767.5,488.5 L661.5,488.5 L661.5,491"/>
<path d="M804.8,460.5 L860.2,460.5"/>
<path d="M855,465.5 L860.2,465.5"/>
<path d="M855,471.5 L860.2,471.5"/>
<path d="M860.2,476.5 L837.5,476.5 L837.5,491"/>
<path d="M877.7,465.5 L882,465.5"/>
</g>
<g fill="none" stroke="#6a9a98" stroke-width="1">
<path d="M388,237.8 L393.3,237.8"/>
<path d="M555,160.3 L560.2,160.3"/>
<path d="M733,176.5 L738.1,176.5"/>
<path d="M644,232.2 L649,232.2"/>
<path d="M800,171.2 L804.5,171.2"/>
<path d="M838.5,265.7 L843.5,265.7"/>
<path d="M538,460.2 L543.4,460.2"/>
<path d="M716,477 L721.1,477"/>
<path d="M783,471.7 L788.2,471.7"/>
</g>
<circle cx="317.5" cy="221.5" r="1.9" fill="#111"/>
<circle cx="532.5" cy="143.5" r="1.9" fill="#111"/>
<circle cx="537.5" cy="143.5" r="1.9" fill="#111"/>
<circle cx="593.5" cy="148.5" r="1.9" fill="#111"/>
<circle cx="649.5" cy="148.5" r="1.9" fill="#111"/>
<circle cx="629.5" cy="304.5" r="1.9" fill="#111"/>
<circle cx="788.5" cy="221.5" r="1.9" fill="#111"/>
<circle cx="516.5" cy="443.5" r="1.9" fill="#111"/>
<circle cx="521.5" cy="443.5" r="1.9" fill="#111"/>
<circle cx="572.5" cy="448.5" r="1.9" fill="#111"/>
<circle cx="572.5" cy="479.5" r="1.9" fill="#111"/>
<rect x="550" y="297" width="4.5" height="3.5" fill="#111"/><rect x="550" y="314" width="4.5" height="3.5" fill="#111"/>
<rect x="743.6" y="247.5" width="4" height="3.3" fill="#111"/>
<rect x="254.6" y="210.79999999999998" width="15.8" height="25.3" fill="#fcdd8a" stroke="#2d2616" stroke-width="1.3"/>
<rect x="255.8" y="212.0" width="13.4" height="22.9" fill="none" stroke="#fff0b8" stroke-width="0.8" opacity="0.55"/>
<text x="262.5" y="226.79999999999998" font-family="Liberation Serif" font-weight="bold" font-size="9" fill="#3a2e0a" text-anchor="middle">I</text>
<rect x="393.90000000000003" y="216.1" width="15.8" height="25.3" fill="#fcdd8a" stroke="#2d2616" stroke-width="1.3"/>
<rect x="395.1" y="217.3" width="13.4" height="22.9" fill="none" stroke="#fff0b8" stroke-width="0.8" opacity="0.55"/>
<path d="M394.8,233.5 H396.3 V224.0 H400.1 V233.5 H402.5 V224.0 H405.6 V233.5 H407.6" fill="none" stroke="#3a2e0a" stroke-width="1.25"/>
<rect x="460.6" y="216.1" width="15.8" height="25.3" fill="#fcdd8a" stroke="#2d2616" stroke-width="1.3"/>
<rect x="461.8" y="217.3" width="13.4" height="22.9" fill="none" stroke="#fff0b8" stroke-width="0.8" opacity="0.55"/>
<text x="468.5" y="232.0" font-family="Liberation Serif" font-weight="bold" font-size="8.5" fill="#3a2e0a" text-anchor="middle">Q</text>
<rect x="504.90000000000003" y="132.9" width="15.8" height="25.3" fill="#fcdd8a" stroke="#2d2616" stroke-width="1.3"/>
<rect x="506.1" y="134.10000000000002" width="13.4" height="22.9" fill="none" stroke="#fff0b8" stroke-width="0.8" opacity="0.55"/>
<text x="512.8" y="148.9" font-family="Liberation Serif" font-weight="bold" font-size="9" fill="#3a2e0a" text-anchor="middle">I</text>
<rect x="610.9" y="82.89999999999999" width="15.8" height="25.3" fill="#fcdd8a" stroke="#2d2616" stroke-width="1.3"/>
<rect x="612.0999999999999" y="84.1" width="13.4" height="22.9" fill="none" stroke="#fff0b8" stroke-width="0.8" opacity="0.55"/>
<path d="M611.0999999999999,93.39999999999999 H613.5999999999999 L614.5999999999999,87.3 H625.3 M613.4,89.1 L614.5999999999999,87.1 L615.8,89.1 M612.8,98.0 H615.8 M614.3,96.5 V99.5 M616.5,100.5 L619.6999999999999,94.5 M621.3,97.1 H624.0999999999999" fill="none" stroke="#3a2e0a" stroke-width="1.15"/>
<rect x="560.8000000000001" y="138.4" width="15.8" height="25.3" fill="#fcdd8a" stroke="#2d2616" stroke-width="1.3"/>
<rect x="562.0" y="139.60000000000002" width="13.4" height="22.9" fill="none" stroke="#fff0b8" stroke-width="0.8" opacity="0.55"/>
<path d="M561.9000000000001,154.8 H571.6 M564.0,142.8 V154.8 M564.0,142.8 H572.5 V149.20000000000002 M571.6,149.20000000000002 H574.2 M571.6,149.20000000000002 V154.8 M574.2,149.20000000000002 V154.8 M561.7,146.4 H564.0" fill="none" stroke="#3a2e0a" stroke-width="1.25"/>
<rect x="671.9" y="121.8" width="15.8" height="25.3" fill="#fcdd8a" stroke="#2d2616" stroke-width="1.3"/>
<rect x="673.0999999999999" y="123.0" width="13.4" height="22.9" fill="none" stroke="#fff0b8" stroke-width="0.8" opacity="0.55"/>
<path d="M677.5999999999999,128.5 L682.3,132.8 L677.5999999999999,136.4 M676.0999999999999,136.6 H686.3 M685.3,129.7 L686.9,128.2 V136.6" fill="none" stroke="#3a2e0a" stroke-width="1.25"/>
<rect x="738.7" y="154.9" width="15.8" height="25.3" fill="#fcdd8a" stroke="#2d2616" stroke-width="1.3"/>
<rect x="739.9" y="156.10000000000002" width="13.4" height="22.9" fill="none" stroke="#fff0b8" stroke-width="0.8" opacity="0.55"/>
<path d="M739.6,162.8 H742.3000000000001 V158.10000000000002 H744.6 V162.8 H753.1 M739.6,171.3 H742.3000000000001 V165.5 H751.5 V171.3 H753.1 M744.4,167.10000000000002 V170.10000000000002" fill="none" stroke="#3a2e0a" stroke-width="1.25"/>
<rect x="805.1" y="149.7" width="15.8" height="25.3" fill="#fcdd8a" stroke="#2d2616" stroke-width="1.3"/>
<rect x="806.3" y="150.9" width="13.4" height="22.9" fill="none" stroke="#fff0b8" stroke-width="0.8" opacity="0.55"/>
<text x="813.0" y="164.5" font-family="Liberation Serif" font-weight="bold" font-size="8.6" fill="#3a2e0a" stroke="#3a2e0a" stroke-width="0.25" text-anchor="middle" textLength="8" lengthAdjust="spacingAndGlyphs">RS</text>
<rect x="878.0" y="155.2" width="15.8" height="25.3" fill="#fcdd8a" stroke="#2d2616" stroke-width="1.3"/>
<rect x="879.1999999999999" y="156.4" width="13.4" height="22.9" fill="none" stroke="#fff0b8" stroke-width="0.8" opacity="0.55"/>
<path d="M883.6999999999999,161.9 L888.4,166.2 L883.6999999999999,169.79999999999998 M882.1999999999999,170.0 H892.4 M891.4,163.1 L893.0,161.6 V170.0" fill="none" stroke="#3a2e0a" stroke-width="1.25"/>
<rect x="599.5" y="205.1" width="15.8" height="25.3" fill="#fcdd8a" stroke="#2d2616" stroke-width="1.3"/>
<rect x="600.6999999999999" y="206.3" width="13.4" height="22.9" fill="none" stroke="#fff0b8" stroke-width="0.8" opacity="0.55"/>
<path d="M604.9,217.1 H610.9 M604.9,219.9 H610.9 M614.1,215.0 V222.0" fill="none" stroke="#3a2e0a" stroke-width="1.25"/>
<rect x="649.6" y="210.79999999999998" width="15.8" height="25.3" fill="#fcdd8a" stroke="#2d2616" stroke-width="1.3"/>
<rect x="650.8" y="212.0" width="13.4" height="22.9" fill="none" stroke="#fff0b8" stroke-width="0.8" opacity="0.55"/>
<path d="M650.5,219.1 H653 V215.2 H661.2 V219.1 H663.5 M653,221.2 V227.1 H661.2 V221.79999999999998 H663 M663,222.2 V227.2" fill="none" stroke="#3a2e0a" stroke-width="1.25"/>
<rect x="727.4" y="238.7" width="15.8" height="25.3" fill="#fcdd8a" stroke="#2d2616" stroke-width="1.3"/>
<rect x="728.5999999999999" y="239.9" width="13.4" height="22.9" fill="none" stroke="#fff0b8" stroke-width="0.8" opacity="0.55"/>
<text x="738.0999999999999" y="256.1" font-family="Liberation Serif" font-weight="bold" font-size="10" fill="#3a2e0a" text-anchor="middle">1</text>
<rect x="771.9" y="260.8" width="15.8" height="25.3" fill="#fcdd8a" stroke="#2d2616" stroke-width="1.3"/>
<rect x="773.0999999999999" y="262.0" width="13.4" height="22.9" fill="none" stroke="#fff0b8" stroke-width="0.8" opacity="0.55"/>
<path d="M777.5999999999999,267.5 L782.3,271.8 L777.5999999999999,275.4 M776.0999999999999,275.59999999999997 H786.3 M785.3,268.7 L786.9,267.2 V275.59999999999997" fill="none" stroke="#3a2e0a" stroke-width="1.25"/>
<rect x="844.1" y="244.1" width="15.8" height="25.3" fill="#fcdd8a" stroke="#2d2616" stroke-width="1.3"/>
<rect x="845.3" y="245.3" width="13.4" height="22.9" fill="none" stroke="#fff0b8" stroke-width="0.8" opacity="0.55"/>
<text x="852.0" y="258.9" font-family="Liberation Serif" font-weight="bold" font-size="8.6" fill="#3a2e0a" stroke="#3a2e0a" stroke-width="0.25" text-anchor="middle" textLength="8" lengthAdjust="spacingAndGlyphs">RS</text>
<rect x="554.8000000000001" y="294.0" width="15.8" height="25.3" fill="#fcdd8a" stroke="#2d2616" stroke-width="1.3"/>
<rect x="556.0" y="295.2" width="13.4" height="22.9" fill="none" stroke="#fff0b8" stroke-width="0.8" opacity="0.55"/>
<text x="563.2" y="311.2" font-family="Liberation Serif" font-weight="bold" font-size="9.5" fill="#3a2e0a" text-anchor="middle">&amp;</text>
<rect x="488.0" y="433.1" width="15.8" height="25.3" fill="#fcdd8a" stroke="#2d2616" stroke-width="1.3"/>
<rect x="489.2" y="434.3" width="13.4" height="22.9" fill="none" stroke="#fff0b8" stroke-width="0.8" opacity="0.55"/>
<text x="495.9" y="449.1" font-family="Liberation Serif" font-weight="bold" font-size="9" fill="#3a2e0a" text-anchor="middle">I</text>
<rect x="594.0" y="383.0" width="15.8" height="25.3" fill="#fcdd8a" stroke="#2d2616" stroke-width="1.3"/>
<rect x="595.1999999999999" y="384.2" width="13.4" height="22.9" fill="none" stroke="#fff0b8" stroke-width="0.8" opacity="0.55"/>
<path d="M594.1999999999999,393.5 H596.6999999999999 L597.6999999999999,387.4 H608.4 M596.5,389.2 L597.6999999999999,387.2 L598.9,389.2 M595.9,398.09999999999997 H598.9 M597.4,396.59999999999997 V399.59999999999997 M599.6,400.59999999999997 L602.8,394.59999999999997 M604.4,397.2 H607.1999999999999" fill="none" stroke="#3a2e0a" stroke-width="1.15"/>
<rect x="544.0" y="438.6" width="15.8" height="25.3" fill="#fcdd8a" stroke="#2d2616" stroke-width="1.3"/>
<rect x="545.1999999999999" y="439.8" width="13.4" height="22.9" fill="none" stroke="#fff0b8" stroke-width="0.8" opacity="0.55"/>
<path d="M545.1,455 H554.8 M547.1999999999999,443 V455 M547.1999999999999,443 H555.6999999999999 V449.4 M554.8,449.4 H557.4 M554.8,449.4 V455 M557.4,449.4 V455 M544.9,446.6 H547.1999999999999" fill="none" stroke="#3a2e0a" stroke-width="1.25"/>
<rect x="655.0" y="422.1" width="15.8" height="25.3" fill="#fcdd8a" stroke="#2d2616" stroke-width="1.3"/>
<rect x="656.1999999999999" y="423.3" width="13.4" height="22.9" fill="none" stroke="#fff0b8" stroke-width="0.8" opacity="0.55"/>
<path d="M660.6999999999999,428.8 L665.4,433.1 L660.6999999999999,436.7 M659.1999999999999,436.9 H669.4 M668.4,430.0 L670.0,428.5 V436.9" fill="none" stroke="#3a2e0a" stroke-width="1.25"/>
<rect x="721.7" y="455.1" width="15.8" height="25.3" fill="#fcdd8a" stroke="#2d2616" stroke-width="1.3"/>
<rect x="722.9" y="456.3" width="13.4" height="22.9" fill="none" stroke="#fff0b8" stroke-width="0.8" opacity="0.55"/>
<path d="M722.6,463.0 H725.3000000000001 V458.3 H727.6 V463.0 H736.1 M722.6,471.5 H725.3000000000001 V465.7 H734.5 V471.5 H736.1 M727.4,467.3 V470.3" fill="none" stroke="#3a2e0a" stroke-width="1.25"/>
<rect x="788.8000000000001" y="449.8" width="15.8" height="25.3" fill="#fcdd8a" stroke="#2d2616" stroke-width="1.3"/>
<rect x="790.0" y="451.0" width="13.4" height="22.9" fill="none" stroke="#fff0b8" stroke-width="0.8" opacity="0.55"/>
<text x="796.7" y="464.59999999999997" font-family="Liberation Serif" font-weight="bold" font-size="8.6" fill="#3a2e0a" stroke="#3a2e0a" stroke-width="0.25" text-anchor="middle" textLength="8" lengthAdjust="spacingAndGlyphs">RS</text>
<rect x="860.8000000000001" y="455.20000000000005" width="15.8" height="25.3" fill="#fcdd8a" stroke="#2d2616" stroke-width="1.3"/>
<rect x="862.0" y="456.40000000000003" width="13.4" height="22.9" fill="none" stroke="#fff0b8" stroke-width="0.8" opacity="0.55"/>
<path d="M866.5,461.90000000000003 L871.2,466.20000000000005 L866.5,469.8 M865.0,470.0 H875.2 M874.2,463.1 L875.8000000000001,461.6 V470.0" fill="none" stroke="#3a2e0a" stroke-width="1.25"/>
<g font-family="Liberation Mono">
<text x="351.3" y="240.9" font-size="9" fill="#558a8a" font-weight="normal" stroke="#558a8a" stroke-width="0.22" textLength="32.6" lengthAdjust="spacingAndGlyphs">REG5OOOO</text>
<text x="351.3" y="251.7" font-size="9" fill="#558a8a" font-weight="normal" stroke="#558a8a" stroke-width="0.22" textLength="36.6" lengthAdjust="spacingAndGlyphs">Rem = Off</text>
<text x="351.3" y="262.1" font-size="9" fill="#558a8a" font-weight="normal" stroke="#558a8a" stroke-width="0.22" textLength="28.5" lengthAdjust="spacingAndGlyphs">O5:OOs+</text>
<text x="351.3" y="272.4" font-size="9" fill="#558a8a" font-weight="normal" stroke="#558a8a" stroke-width="0.22" textLength="28.5" lengthAdjust="spacingAndGlyphs">O5:OOs+</text>
<text x="563.7" y="107.6" font-size="9" fill="#558a8a" font-weight="normal" stroke="#558a8a" stroke-width="0.22" textLength="32.6" lengthAdjust="spacingAndGlyphs">REG5OO61</text>
<text x="563.7" y="118.3" font-size="9" fill="#558a8a" font-weight="normal" stroke="#558a8a" stroke-width="0.22" textLength="40.7" lengthAdjust="spacingAndGlyphs">Rem = Off+</text>
<text x="563.7" y="128.4" font-size="9" fill="#558a8a" font-weight="normal" stroke="#558a8a" stroke-width="0.22" textLength="20.4" lengthAdjust="spacingAndGlyphs">On=O+</text>
<text x="563.7" y="138.7" font-size="9" fill="#558a8a" font-weight="normal" stroke="#558a8a" stroke-width="0.22" textLength="20.4" lengthAdjust="spacingAndGlyphs">Off=O</text>
<text x="563.7" y="149.1" font-size="9" fill="#558a8a" font-weight="normal" stroke="#558a8a" stroke-width="0.22" textLength="28.5" lengthAdjust="spacingAndGlyphs">Start=O</text>
<text x="518.3" y="163.4" font-size="9" fill="#558a8a" font-weight="normal" stroke="#558a8a" stroke-width="0.22" textLength="32.6" lengthAdjust="spacingAndGlyphs">REG5OO21</text>
<text x="518.3" y="174.2" font-size="9" fill="#558a8a" font-weight="normal" stroke="#558a8a" stroke-width="0.22" textLength="36.6" lengthAdjust="spacingAndGlyphs">Rem = Off</text>
<text x="518.3" y="184.4" font-size="9" fill="#558a8a" font-weight="normal" stroke="#558a8a" stroke-width="0.22" textLength="28.5" lengthAdjust="spacingAndGlyphs">OO:O1s+</text>
<text x="696.3" y="179.5" font-size="9" fill="#558a8a" font-weight="normal" stroke="#558a8a" stroke-width="0.22" textLength="32.6" lengthAdjust="spacingAndGlyphs">REG5OO4O</text>
<text x="696.3" y="190.1" font-size="9" fill="#558a8a" font-weight="normal" stroke="#558a8a" stroke-width="0.22" textLength="36.6" lengthAdjust="spacingAndGlyphs">Rem = Off</text>
<text x="696.3" y="200.4" font-size="9" fill="#558a8a" font-weight="normal" stroke="#558a8a" stroke-width="0.22" textLength="28.5" lengthAdjust="spacingAndGlyphs">OO:O1s+</text>
<text x="607.5" y="235.1" font-size="9" fill="#558a8a" font-weight="normal" stroke="#558a8a" stroke-width="0.22" textLength="32.6" lengthAdjust="spacingAndGlyphs">REG5OO33</text>
<text x="607.5" y="245.8" font-size="9" fill="#558a8a" font-weight="normal" stroke="#558a8a" stroke-width="0.22" textLength="36.6" lengthAdjust="spacingAndGlyphs">Rem = Off</text>
<text x="607.5" y="256.5" font-size="9" fill="#558a8a" font-weight="normal" stroke="#558a8a" stroke-width="0.22" textLength="28.5" lengthAdjust="spacingAndGlyphs">OO:O5s+</text>
<text x="771" y="174.3" font-size="9" fill="#558a8a" font-weight="normal" stroke="#558a8a" stroke-width="0.22" textLength="32.6" lengthAdjust="spacingAndGlyphs">Rem=off-</text>
<text x="810" y="268.8" font-size="9" fill="#558a8a" font-weight="normal" stroke="#558a8a" stroke-width="0.22" textLength="32.6" lengthAdjust="spacingAndGlyphs">Rem=off-</text>
<text x="547" y="407.7" font-size="9" fill="#558a8a" font-weight="normal" stroke="#558a8a" stroke-width="0.22" textLength="32.6" lengthAdjust="spacingAndGlyphs">REG5OO63</text>
<text x="547" y="418.1" font-size="9" fill="#558a8a" font-weight="normal" stroke="#558a8a" stroke-width="0.22" textLength="40.7" lengthAdjust="spacingAndGlyphs">Rem = Off+</text>
<text x="547" y="428.1" font-size="9" fill="#558a8a" font-weight="normal" stroke="#558a8a" stroke-width="0.22" textLength="20.4" lengthAdjust="spacingAndGlyphs">On=O+</text>
<text x="547" y="438.4" font-size="9" fill="#558a8a" font-weight="normal" stroke="#558a8a" stroke-width="0.22" textLength="20.4" lengthAdjust="spacingAndGlyphs">Off=O</text>
<text x="547" y="449.1" font-size="9" fill="#558a8a" font-weight="normal" stroke="#558a8a" stroke-width="0.22" textLength="28.5" lengthAdjust="spacingAndGlyphs">Start=O</text>
<text x="501.6" y="463.3" font-size="9" fill="#558a8a" font-weight="normal" stroke="#558a8a" stroke-width="0.22" textLength="32.6" lengthAdjust="spacingAndGlyphs">REG5OO51</text>
<text x="501.6" y="474.1" font-size="9" fill="#558a8a" font-weight="normal" stroke="#558a8a" stroke-width="0.22" textLength="36.6" lengthAdjust="spacingAndGlyphs">Rem = Off</text>
<text x="501.6" y="484.0" font-size="9" fill="#558a8a" font-weight="normal" stroke="#558a8a" stroke-width="0.22" textLength="28.5" lengthAdjust="spacingAndGlyphs">OO:O1s+</text>
<text x="679.7" y="480.1" font-size="9" fill="#558a8a" font-weight="normal" stroke="#558a8a" stroke-width="0.22" textLength="32.6" lengthAdjust="spacingAndGlyphs">REG5OO62</text>
<text x="679.7" y="490.9" font-size="9" fill="#558a8a" font-weight="normal" stroke="#558a8a" stroke-width="0.22" textLength="36.6" lengthAdjust="spacingAndGlyphs">Rem = Off</text>
<text x="754.4" y="474.8" font-size="9" fill="#558a8a" font-weight="normal" stroke="#558a8a" stroke-width="0.22" textLength="32.6" lengthAdjust="spacingAndGlyphs">Rem=off-</text>
<text x="254" y="195.6" font-size="8.8" fill="#181818" font-weight="bold" textLength="48.8" lengthAdjust="spacingAndGlyphs">PUSH BUTTON1</text>
<text x="254" y="207.3" font-size="8.8" fill="#181818" font-weight="bold" textLength="16.3" lengthAdjust="spacingAndGlyphs">IOO1</text>
<text x="393.3" y="213.1" font-size="8.8" fill="#181818" font-weight="bold" textLength="57.0" lengthAdjust="spacingAndGlyphs">BSOOO1[M5OOO1]</text>
<text x="460" y="201.6" font-size="8.8" fill="#181818" font-weight="bold" textLength="28.5" lengthAdjust="spacingAndGlyphs">BUZZER1</text>
<text x="460" y="213.1" font-size="8.8" fill="#181818" font-weight="bold" textLength="16.3" lengthAdjust="spacingAndGlyphs">QOO1</text>
<text x="504.3" y="130.1" font-size="8.8" fill="#181818" font-weight="bold" textLength="16.3" lengthAdjust="spacingAndGlyphs">IOO2</text>
<text x="609.8" y="79.4" font-size="8.8" fill="#181818" font-weight="bold" textLength="57.0" lengthAdjust="spacingAndGlyphs">BSOO62[M5OO62]</text>
<text x="560" y="135.1" font-size="8.8" fill="#181818" font-weight="bold" textLength="57.0" lengthAdjust="spacingAndGlyphs">BSOO22[M5OO22]</text>
<text x="671.3" y="118.5" font-size="8.8" fill="#181818" font-weight="bold" textLength="57.0" lengthAdjust="spacingAndGlyphs">BSOO37[M5OO37]</text>
<text x="738" y="151.9" font-size="8.8" fill="#181818" font-weight="bold" textLength="57.0" lengthAdjust="spacingAndGlyphs">BSOO41[M5OO41]</text>
<text x="804.3" y="146.5" font-size="8.8" fill="#181818" font-weight="bold" textLength="57.0" lengthAdjust="spacingAndGlyphs">BSOO23[M5OO23]</text>
<text x="877.2" y="152.4" font-size="8.8" fill="#181818" font-weight="bold" textLength="57.0" lengthAdjust="spacingAndGlyphs">BSOO36[M5OO36]</text>
<text x="599" y="202.1" font-size="8.8" fill="#181818" font-weight="bold" textLength="57.0" lengthAdjust="spacingAndGlyphs">BSOO4O[M5OO4O]</text>
<text x="649" y="207.6" font-size="8.8" fill="#181818" font-weight="bold" textLength="57.0" lengthAdjust="spacingAndGlyphs">BSOO34[M5OO34]</text>
<text x="727" y="235.3" font-size="8.8" fill="#181818" font-weight="bold" textLength="57.0" lengthAdjust="spacingAndGlyphs">BSOO35[M5OO35]</text>
<text x="771.3" y="257.0" font-size="8.8" fill="#181818" font-weight="bold" textLength="57.0" lengthAdjust="spacingAndGlyphs">BSOO38[M5OO38]</text>
<text x="843.5" y="240.7" font-size="8.8" fill="#181818" font-weight="bold" textLength="57.0" lengthAdjust="spacingAndGlyphs">BSOO33[M5OO33]</text>
<text x="554" y="290.8" font-size="8.8" fill="#181818" font-weight="bold" textLength="57.0" lengthAdjust="spacingAndGlyphs">BSOO39[M5OO39]</text>
<text x="487.4" y="430.6" font-size="8.8" fill="#181818" font-weight="bold" textLength="16.3" lengthAdjust="spacingAndGlyphs">IOO4</text>
<text x="593.4" y="380.1" font-size="8.8" fill="#181818" font-weight="bold" textLength="57.0" lengthAdjust="spacingAndGlyphs">BSOO64[M5OO64]</text>
<text x="543.4" y="435.7" font-size="8.8" fill="#181818" font-weight="bold" textLength="57.0" lengthAdjust="spacingAndGlyphs">BSOO52[M5OO52]</text>
<text x="654.4" y="418.9" font-size="8.8" fill="#181818" font-weight="bold" textLength="57.0" lengthAdjust="spacingAndGlyphs">BSOO58[M5OO58]</text>
<text x="721.1" y="452.1" font-size="8.8" fill="#181818" font-weight="bold" textLength="57.0" lengthAdjust="spacingAndGlyphs">BSOO63[M5OO63]</text>
<text x="788.2" y="446.1" font-size="8.8" fill="#181818" font-weight="bold" textLength="57.0" lengthAdjust="spacingAndGlyphs">BSOO53[M5OO53]</text>
<text x="860.2" y="451.9" font-size="8.8" fill="#181818" font-weight="bold" textLength="57.0" lengthAdjust="spacingAndGlyphs">BSOO57[M5OO57]</text>
</g>
</g></svg>
</body></html>
